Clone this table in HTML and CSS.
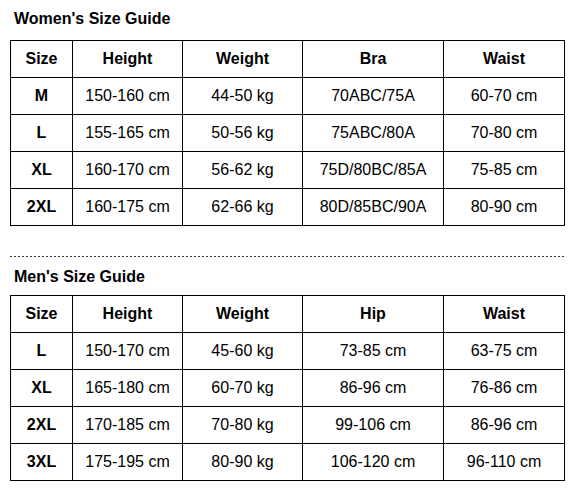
FILE: index.html
```html
<!DOCTYPE html>
<html lang="en">
<head>
<meta charset="utf-8">
<title>Size Guide</title>
<link rel="stylesheet" href="styles.css">
</head>
<body>
<div class="guide">
  <h2 class="title title-women">Women's Size Guide</h2>
  <table class="size-table">
    <colgroup>
      <col class="c-size"><col class="c-height"><col class="c-weight"><col class="c-extra"><col class="c-waist">
    </colgroup>
    <thead>
      <tr><th>Size</th><th>Height</th><th>Weight</th><th>Bra</th><th>Waist</th></tr>
    </thead>
    <tbody>
      <tr><th>M</th><td>150-160 cm</td><td>44-50 kg</td><td>70ABC/75A</td><td>60-70 cm</td></tr>
      <tr><th>L</th><td>155-165 cm</td><td>50-56 kg</td><td>75ABC/80A</td><td>70-80 cm</td></tr>
      <tr><th>XL</th><td>160-170 cm</td><td>56-62 kg</td><td>75D/80BC/85A</td><td>75-85 cm</td></tr>
      <tr><th>2XL</th><td>160-175 cm</td><td>62-66 kg</td><td>80D/85BC/90A</td><td>80-90 cm</td></tr>
    </tbody>
  </table>

  <div class="divider"></div>

  <h2 class="title title-men">Men's Size Guide</h2>
  <table class="size-table">
    <colgroup>
      <col class="c-size"><col class="c-height"><col class="c-weight"><col class="c-extra"><col class="c-waist">
    </colgroup>
    <thead>
      <tr><th>Size</th><th>Height</th><th>Weight</th><th>Hip</th><th>Waist</th></tr>
    </thead>
    <tbody>
      <tr><th>L</th><td>150-170 cm</td><td>45-60 kg</td><td>73-85 cm</td><td>63-75 cm</td></tr>
      <tr><th>XL</th><td>165-180 cm</td><td>60-70 kg</td><td>86-96 cm</td><td>76-86 cm</td></tr>
      <tr><th>2XL</th><td>170-185 cm</td><td>70-80 kg</td><td>99-106 cm</td><td>86-96 cm</td></tr>
      <tr><th>3XL</th><td>175-195 cm</td><td>80-90 kg</td><td>106-120 cm</td><td>96-110 cm</td></tr>
    </tbody>
  </table>
</div>
</body>
</html>
```

FILE: styles.css
```css
html, body {
  margin: 0;
  padding: 0;
  background: #fff;
}

body {
  font-family: "Liberation Sans", Arial, sans-serif;
  color: #000;
}

.guide {
  padding: 10px 8px 10px 10px;
  width: 554px;
}

.title {
  margin: 0;
  padding-left: 4px;
  font-size: 16px;
  line-height: 18px;
  font-weight: bold;
}

.title-women {
  margin-bottom: 12px;
}

.title-men {
  margin-bottom: 9px;
}

.size-table {
  width: 554px;
  border-collapse: collapse;
  table-layout: fixed;
  font-size: 16px;
}

.c-size { width: 62px; }
.c-height { width: 110px; }
.c-weight { width: 120px; }
.c-extra { width: 141px; }
.c-waist { width: 121px; }

.size-table th,
.size-table td {
  border: 1px solid #000;
  height: 36px;
  padding: 0;
  text-align: center;
  vertical-align: middle;
  line-height: 18px;
}

.size-table th {
  font-weight: bold;
}

.size-table td {
  font-weight: normal;
}

.divider {
  height: 1px;
  margin: 30px 0 11px;
  background: repeating-linear-gradient(to right, #333 0, #333 2px, transparent 2px, transparent 4px);
}
```
